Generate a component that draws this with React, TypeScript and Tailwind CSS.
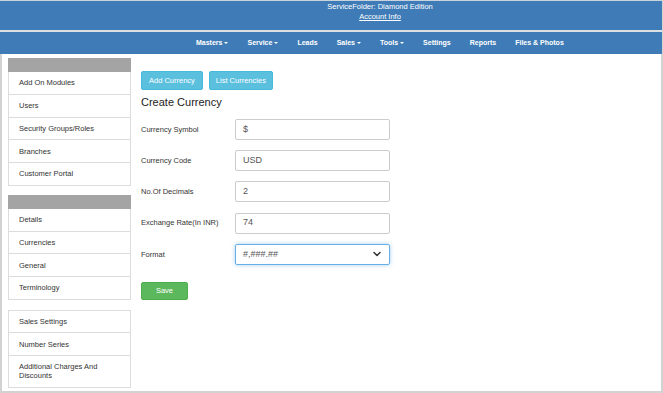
import { ChevronDown } from "lucide-react";

const navItems = [
    { name: 'Masters', caret: true },
    { name: 'Service', caret: true },
    { name: 'Leads', caret: false },
    { name: 'Sales', caret: true },
    { name: 'Tools', caret: true },
    { name: 'Settings', caret: false },
    { name: 'Reports', caret: false },
    { name: 'Files & Photos', caret: false },
];

const fields = [
    { label: 'Currency Symbol', value: '$' },
    { label: 'Currency Code', value: 'USD' },
    { label: 'No.Of Decimals', value: '2' },
    { label: 'Exchange Rate(In INR)', value: '74' },
];

const SideGroup = ({ items, header, itemH }: { items: string[], header: boolean, itemH: string }) => {
    return (
        <div className="flex flex-col">
            {header && <div className="h-[14px] bg-[#a4a4a4]" />}
            <div className={header ? "border-x border-[#dcdcdc]" : "border-x border-t border-[#dcdcdc]"}>
                {items.map((item) => (
                    <div key={item} className={`${item.length > 25 ? 'h-[32px] leading-[9px]' : itemH} flex items-center border-b border-[#dcdcdc] pl-[10px] pr-[12px] text-[7.5px] text-[#333]`}>
                        {item}
                    </div>
                ))}
            </div>
        </div>
    );
};

export default function App() {
    return (
        <div className="w-[663px] h-[393px] bg-white overflow-hidden font-['Liberation_Sans',Arial,sans-serif] flex flex-col border-r border-[#d2d2d2]">
            {/* top banner */}
            <div className="h-[30px] shrink-0 bg-[#3f7cb7] border-t border-[#c9d3de] flex flex-col items-center pl-[98px] pt-[1px] text-white text-[7.5px] leading-[9.5px]">
                <span>ServiceFolder: Diamond Edition</span>
                <span className="underline">Account Info</span>
            </div>
            <div className="h-[2px] shrink-0 bg-[#dcdfe3]" />
            {/* nav */}
            <div className="h-[22px] shrink-0 bg-[#3f7cb7] flex items-center pl-[196px] gap-[19px] text-white text-[7px] font-bold">
                {navItems.map((item) => (
                    <span key={item.name} className="flex items-center">
                        {item.name}
                        {item.caret && <span className="ml-[2px] w-0 h-0 border-x-[2.5px] border-t-[2.5px] border-x-transparent border-t-white" />}
                    </span>
                ))}
            </div>
            {/* body */}
            <div className="flex-1 flex border-l-2 border-r border-b-2 border-[#d2d2d2] pl-[6px] pt-[4px]">
                <div className="w-[123px] shrink-0 flex flex-col">
                    <SideGroup header itemH="h-[22.8px]" items={['Add On Modules', 'Users', 'Security Groups/Roles', 'Branches', 'Customer Portal']} />
                    <div className="h-[9px]" />
                    <SideGroup header itemH="h-[22.75px]" items={['Details', 'Currencies', 'General', 'Terminology']} />
                    <div className="h-[10px]" />
                    <SideGroup header={false} itemH="h-[22.5px]" items={['Sales Settings', 'Number Series', 'Additional Charges And Discounts']} />
                </div>
                <div className="ml-[10px] pt-[13px] flex flex-col">
                    <div className="flex gap-[6px]">
                        <button className="h-[19px] px-[7px] rounded-[2px] bg-[#5bc0de] border border-[#46b8da] text-white text-[7.5px]">Add Currency</button>
                        <button className="h-[19px] px-[6px] rounded-[2px] bg-[#5bc0de] border border-[#46b8da] text-white text-[7.5px]">List Currencies</button>
                    </div>
                    <h4 className="mt-[6px] text-[11px] leading-[12px] text-[#222]">Create Currency</h4>
                    <div className="mt-[11px] flex flex-col gap-[10.2px]">
                        {fields.map((field) => (
                            <div key={field.label} className="flex items-center">
                                <label className="w-[94px] text-[7.5px] text-[#333]">{field.label}</label>
                                <div className="w-[155px] h-[21px] border border-[#cccccc] rounded-[2px] flex items-center pl-[7px] text-[9px] text-[#555]">
                                    {field.value}
                                </div>
                            </div>
                        ))}
                        <div className="flex items-center">
                            <label className="w-[94px] text-[7.5px] text-[#333]">Format</label>
                            <div className="w-[155px] h-[21px] border border-[#66afe9] rounded-[2px] shadow-[0_0_4px_rgba(102,175,233,0.6)] flex items-center justify-between pl-[7px] pr-[6px] text-[9px] text-[#555]">
                                <span>#,###.##</span>
                                <ChevronDown size={12} strokeWidth={3} color="#333" />
                            </div>
                        </div>
                    </div>
                    <button className="mt-[17px] w-[47px] h-[18px] rounded-[2px] bg-[#5cb85c] border border-[#4cae4c] text-white text-[7.5px]">Save</button>
                </div>
            </div>
        </div>
    );
}
